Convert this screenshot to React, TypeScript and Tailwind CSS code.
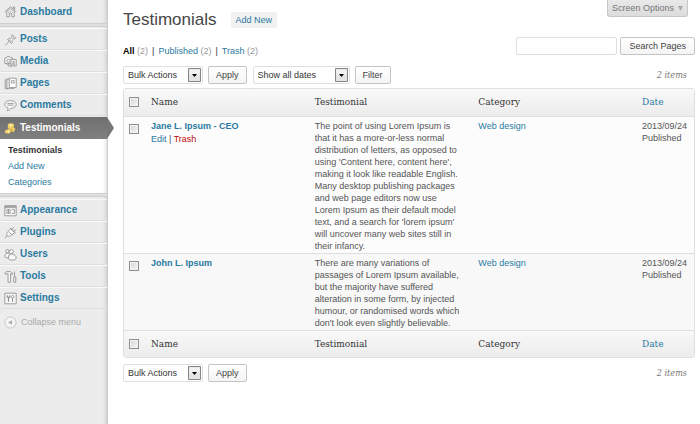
import React, { useState } from "react";

const serif = "font-['DejaVu_Serif_Condensed','DejaVu_Serif',serif]";

const icons: Record<string, React.ReactNode> = {
  dashboard: (
    <>
      <path d="M1.500 8 8 2l6.500 6-1 1L8 4 2.500 9z" fill="#fff" />
      <path d="M11.500 4.500V2.500H13V6" />
      <path d="M3.500 9v5.500h3V10h3v4.500h3V9" fill="#f8f8f8" />
      <path d="M5 9h1M7.500 7.500h1M10 9h1" />
    </>
  ),
  posts: (
    <>
      <path d="M10 2 14.500 6.500l-1.500.5-1-.3-2 2.300.3 3-1 1-5-5 1-1 3 .3L10 5l-.5-1.500z" fill="#f8f8f8" />
      <path d="m6.500 10.500-5 4.500M11 5l1 1M6 8l3 3" />
    </>
  ),
  media: (
    <>
      <path d="M1 3.500h2l1-1.500h3l1 1.500h2.500v7H1z" fill="#f8f8f8" />
      <circle cx="5.500" cy="7" r="2" />
      <path d="M8.500 5.500h6.500v8h-2.500v-5.500H11v5.500a1.500 1.200 0 1 1-1.500-1.500H8.500z" fill="#f8f8f8" />
      <path d="M5 13.500h3M3.500 12h3" />
    </>
  ),
  pages: (
    <>
      <path d="M6.500 1.500H15v11.500H6.500z" fill="#fff" />
      <path d="M6.500 2.500h-3v11.500h9v-1M3.500 3.500h-2v11h3.500M9 4.500h3.500v3H9z" />
    </>
  ),
  comments: (
    <>
      <path d="M8 2c4.500 0 7 2 7 4.700S12.500 11.400 8.500 11.400c-1 1.800-2.500 2.800-4.500 3.100.8-1 1.200-2.300 1-3.500C2.500 10.300 1 8.700 1 6.700 1 4 3.500 2 8 2z" fill="#f8f8f8" />
      <path d="M4 5.500h8M4 7.500h8" />
    </>
  ),
  appearance: (
    <>
      <path d="M1 2h14v12.500H1z" fill="#f8f8f8" />
      <path d="M1 4.500h14M1 3.200h14M3.500 7h4v4.500h-4zM5.500 7v4M9.500 7H13v4.500H9.500" />
    </>
  ),
  plugins: (
    <>
      <path d="M4 8 8.500 3l5 5-5.500 4c-1.500 1.200-3 1-4 .2S3 9.500 4 8z" fill="#f8f8f8" />
      <path d="m7.500 2.500 6.500 6.500M10 4l2-2.500M12.500 6.500l2.500-2M4 12l-3 3M6 7.500l4 3.500" />
    </>
  ),
  users: (
    <>
      <circle cx="4" cy="4" r="2" fill="#f8f8f8" />
      <path d="M1 11c0-3 1-4.500 3-4.500 1.500 0 2.500.7 2.800 2L6 12H2z" fill="#f8f8f8" />
      <circle cx="9" cy="4.500" r="2.500" fill="#f8f8f8" />
      <path d="M5.500 12.500C5.500 9 7 7.500 9.500 7.500s5.500 2 5.500 4.500-1.500 2.800-5 2.800-4.500-.8-4.500-2.300z" fill="#f8f8f8" />
    </>
  ),
  tools: (
    <>
      <path d="M1.500 5V3L3 2h5l2.500 2v1.500L8 4.500V15H5V4.500z" fill="#f8f8f8" />
      <path d="M13 2v6M12 8.500h2.500V15H12z" fill="#f8f8f8" />
    </>
  ),
  settings: (
    <>
      <path d="M1 1.500h14v13H1z" fill="#f8f8f8" />
      <path d="M4 4v2.500h3V4M5.500 6.500V12M10.500 8v4" strokeWidth="1.300" />
      <circle cx="10.500" cy="6" r="1.700" />
    </>
  ),
};

function MenuIcon({ name }: { name: string }) {
  return (
    <svg viewBox="0 0 16 16" className="size-[13px] shrink-0" fill="none" stroke="#8b8b8b" aria-hidden="true">
      {icons[name]}
    </svg>
  );
}

function PinIcon() {
  return (
    <svg viewBox="0 0 16 16" className="size-[13px] shrink-0" aria-hidden="true">
      <path d="M5 2.500C7.500 1 12 1.500 12.500 3.500c.4 1.700-1 2-.8 3l2.300 2-2.200 4-3.200-1-2 3L1 13.500 1.500 10l4.500-1.500L4.500 6z" fill="#f2cf62" />
      <path d="M6.500 3.500c1.500-.8 3.500 0 3.700 1L8 6.200zM3.500 11.500l2.500-1 1 1.500-1.500 1.500z" fill="#fff3c0" />
      <path d="m7.500 8.500 3 2" stroke="#a07a1c" />
    </svg>
  );
}

type Item = { label: string; icon: string };

const contentMenu: Item[] = [
  { label: "Posts", icon: "posts" },
  { label: "Media", icon: "media" },
  { label: "Pages", icon: "pages" },
  { label: "Comments", icon: "comments" },
];

const adminMenu: Item[] = [
  { label: "Appearance", icon: "appearance" },
  { label: "Plugins", icon: "plugins" },
  { label: "Users", icon: "users" },
  { label: "Tools", icon: "tools" },
  { label: "Settings", icon: "settings" },
];

function MenuGroup({ items }: { items: Item[] }) {
  return (
    <ul className="py-px">
      {items.map((item) => (
        <li key={item.label} className="border-t border-b border-t-[#f9f9f9] border-b-[#dfdfdf]">
          <a href="#" className="flex h-5 items-center gap-[3px] pl-1 text-[10px] font-bold text-[#2a7aa0]">
            <MenuIcon name={item.icon} />
            {item.label}
          </a>
        </li>
      ))}
    </ul>
  );
}

function Separator() {
  return <div className="h-1 border-y border-[#cfcfcf] bg-[#dfdfdf]" />;
}

function Sidebar() {
  return (
    <nav className="w-[108px] shrink-0 border-r border-[#cccccc] bg-[#ececec] shadow-[inset_-4px_0_4px_-3px_rgba(0,0,0,0.15)]">
      <a href="#" className="flex h-[23px] items-center gap-[3px] pl-1 text-[10px] font-bold text-[#2a7aa0]">
        <MenuIcon name="dashboard" />
        Dashboard
      </a>
      <Separator />
      <MenuGroup items={contentMenu} />

      <a
        href="#"
        className="relative flex h-[22px] items-center gap-[3px] bg-linear-to-b from-[#6f6f6f] to-[#808080] pl-1 text-[10px] font-bold text-white"
      >
        <PinIcon />
        Testimonials
        <svg viewBox="0 0 7 22" className="absolute top-0 left-full h-full w-[7px]" aria-hidden="true">
          <path d="M0 0 7 11 0 22z" fill="#777" />
        </svg>
      </a>
      <ul className="bg-white pt-[3px] pb-[3px] pl-2 text-[9px] leading-4 shadow-[inset_-4px_0_4px_-3px_rgba(0,0,0,0.15)]">
        <li>
          <a href="#" className="font-bold text-[#333]">Testimonials</a>
        </li>
        <li>
          <a href="#" className="text-[#2a7aa0]">Add New</a>
        </li>
        <li>
          <a href="#" className="text-[#2a7aa0]">Categories</a>
        </li>
      </ul>
      <Separator />
      <div className="pt-px">
        <MenuGroup items={adminMenu} />
      </div>

      <button type="button" className="flex h-6 items-center gap-1 pl-1 text-[9px] text-[#aaa]">
        <svg viewBox="0 0 14 14" className="size-[13px]" aria-hidden="true">
          <circle cx="7" cy="7" r="6" fill="#f4f4f4" stroke="#c4c4c4" />
          <path d="M8.500 4.500v5L4.500 7z" fill="#aaa" />
        </svg>
        Collapse menu
      </button>
    </nav>
  );
}

function Button({ children, wide }: { children: React.ReactNode; wide?: boolean }) {
  return (
    <button
      type="button"
      className={`h-[18px] rounded-[2px] border border-[#c4c4c4] bg-linear-to-b from-white to-[#f4f4f4] text-[9px] leading-4 text-[#444] ${
        wide ? "px-2" : "px-[7px]"
      }`}
    >
      {children}
    </button>
  );
}

function Dropdown({ label, options, wide }: { label: string; options: string[]; wide?: boolean }) {
  return (
    <div className={wide ? "relative w-[97px]" : "relative w-20"}>
      <select
        aria-label={label}
        className="block h-[18px] w-full appearance-none rounded-[2px] border border-[#dfdfdf] bg-white pl-1 text-[9px] leading-4 text-[#333]"
      >
        {options.map((option) => (
          <option key={option}>{option}</option>
        ))}
      </select>
      <svg viewBox="0 0 13 14" className="pointer-events-none absolute top-[2px] right-[2px] h-[14px] w-[13px]" aria-hidden="true">
        <path d="M.5.5h12v13H.5z" fill="#e4e4e4" stroke="#858585" />
        <path d="M1.500 1.500h10V7h-10z" fill="#f1f1f1" />
        <path d="M4 6h5L6.500 9z" fill="#000" />
      </svg>
    </div>
  );
}

type CheckProps = { label: string; checked: boolean; onChange: () => void };

function Check({ label, checked, onChange }: CheckProps) {
  return (
    <input
      type="checkbox"
      aria-label={label}
      checked={checked}
      onChange={onChange}
      className="block size-[10px] appearance-none border border-[#8e8f8f] bg-linear-to-br from-[#d3d5d9] to-[#f6f6f6] shadow-[inset_0_0_0_1px_#f4f4f4] checked:bg-[#21759b]"
    />
  );
}

const testimonials = [
  {
    name: "Jane L. Ipsum - CEO",
    text: "The point of using Lorem Ipsum is that it has a more-or-less normal distribution of letters, as opposed to using 'Content here, content here', making it look like readable English. Many desktop publishing packages and web page editors now use Lorem Ipsum as their default model text, and a search for 'lorem ipsum' will uncover many web sites still in their infancy.",
    actions: true,
  },
  {
    name: "John L. Ipsum",
    text: "There are many variations of passages of Lorem Ipsum available, but the majority have suffered alteration in some form, by injected humour, or randomised words which don't look even slightly believable.",
    actions: false,
  },
];

function HeadingRow({ label, checked, onChange }: CheckProps) {
  return (
    <tr className={`h-[27px] bg-linear-to-b from-[#f9f9f9] to-[#ececec] text-left text-[10px] text-[#333] ${serif}`}>
      <td className="w-[21px] pl-[5px]">
        <Check label={label} checked={checked} onChange={onChange} />
      </td>
      <th scope="col" className="pl-[6px] font-normal">Name</th>
      <th scope="col" className="pl-[6px] font-normal">Testimonial</th>
      <th scope="col" className="pl-[6px] font-normal">Category</th>
      <th scope="col" className="w-[58px] pl-[6px] font-normal">
        <a href="#" className="text-[#2a7aa0]">Date</a>
      </th>
    </tr>
  );
}

function TestimonialTable() {
  const [selected, setSelected] = useState<string[]>([]);
  const allSelected = selected.length === testimonials.length;

  const toggle = (name: string) =>
    setSelected(selected.includes(name) ? selected.filter((n) => n !== name) : [...selected, name]);
  const toggleAll = () => setSelected(allSelected ? [] : testimonials.map((t) => t.name));

  return (
    <div className="overflow-hidden rounded-[3px] border border-[#dfdfdf]">
      <table className="w-full table-fixed">
        <thead>
          <HeadingRow label="Select all" checked={allSelected} onChange={toggleAll} />
        </thead>
        <tbody className="text-[9px] leading-3 text-[#555]">
          {testimonials.map((t) => (
            <tr key={t.name} className="border-t border-[#dfdfdf] bg-[#fcfcfc] align-top even:bg-[#f8f8f8]">
              <td className="pt-[7px] pl-[5px]">
                <Check label={`Select ${t.name}`} checked={selected.includes(t.name)} onChange={() => toggle(t.name)} />
              </td>
              <td className="pt-[3px] pl-[6px]">
                <a href="#" className="font-bold text-[#2a7aa0]">{t.name}</a>
                {t.actions && (
                  <div className="pt-px">
                    <a href="#" className="text-[#2a7aa0]">Edit</a> |{" "}
                    <a href="#" className="text-[#bc0b0b]">Trash</a>
                  </div>
                )}
              </td>
              <td className="pt-[3px] pr-[9px] pb-px pl-[6px]">{t.text}</td>
              <td className="pt-[3px] pl-[6px]">
                <a href="#" className="text-[#2a7aa0]">Web design</a>
              </td>
              <td className="pt-[3px] pl-[6px]">
                2013/09/24
                <br />
                Published
              </td>
            </tr>
          ))}
        </tbody>
        <tfoot className="border-t border-[#dfdfdf]">
          <HeadingRow label="Select all below" checked={allSelected} onChange={toggleAll} />
        </tfoot>
      </table>
    </div>
  );
}

function ItemCount() {
  return <span className={`ml-auto pr-2 text-[9px] text-[#777] italic ${serif}`}>2 items</span>;
}

const App: React.FC = () => {
  return (
    <div className="flex min-h-screen bg-white font-['Liberation_Sans',Arial,sans-serif] text-[9px] leading-3 text-[#333]">
      <Sidebar />

      <main className="min-w-0 flex-1 pr-[5px] pl-[15px]">
        <div className="flex items-start justify-between pr-[7px]">
          <div className="flex items-center gap-[14px] pt-[10px]">
            <h1 className="text-[17px] leading-5 text-[#464646]">Testimonials</h1>
            <a href="#" className="rounded-[2px] bg-[#f1f1f1] px-[5px] py-[2px] text-[#2a7aa0]">
              Add New
            </a>
          </div>
          <button
            type="button"
            className="flex h-[17px] items-center gap-1 rounded-b-[3px] border border-t-0 border-[#c6c6c6] bg-linear-to-b from-[#e9e9e9] to-[#dcdcdc] px-1 text-[9px] text-[#777]"
          >
            Screen Options
            <svg viewBox="0 0 5 5" className="size-[5px]" aria-hidden="true">
              <path d="M0 0h5L2.500 5z" fill="#aaa" />
            </svg>
          </button>
        </div>

        <div className="flex items-center justify-between pt-[5px]">
          <ul className="flex gap-1 pt-[10px]">
            <li>
              <a href="#"><b className="text-black">All</b> <span className="text-[#999]">(2)</span></a>
            </li>
            <li>|</li>
            <li>
              <a href="#" className="text-[#2a7aa0]">Published <span className="text-[#999]">(2)</span></a>
            </li>
            <li>|</li>
            <li>
              <a href="#" className="text-[#2a7aa0]">Trash <span className="text-[#999]">(2)</span></a>
            </li>
          </ul>
          <form className="flex gap-[3px]" onSubmit={(e) => e.preventDefault()}>
            <input
              type="search"
              aria-label="Search Pages"
              className="h-[18px] w-[101px] rounded-[2px] border border-[#dfdfdf] bg-white px-1"
            />
            <Button wide>Search Pages</Button>
          </form>
        </div>

        <div className="flex items-center pt-[9px] pb-1">
          <div className="flex gap-[5px]">
            <Dropdown label="Bulk actions" options={["Bulk Actions", "Edit", "Move to Trash"]} />
            <Button>Apply</Button>
          </div>
          <div className="flex gap-[5px] pl-[6px]">
            <Dropdown label="Filter by date" options={["Show all dates", "September 2013"]} wide />
            <Button>Filter</Button>
          </div>
          <ItemCount />
        </div>

        <TestimonialTable />

        <div className="flex items-center gap-[5px] pt-[6px]">
          <Dropdown label="Bulk actions below" options={["Bulk Actions", "Edit", "Move to Trash"]} />
          <Button>Apply</Button>
          <ItemCount />
        </div>
      </main>
    </div>
  );
};

export default App;
